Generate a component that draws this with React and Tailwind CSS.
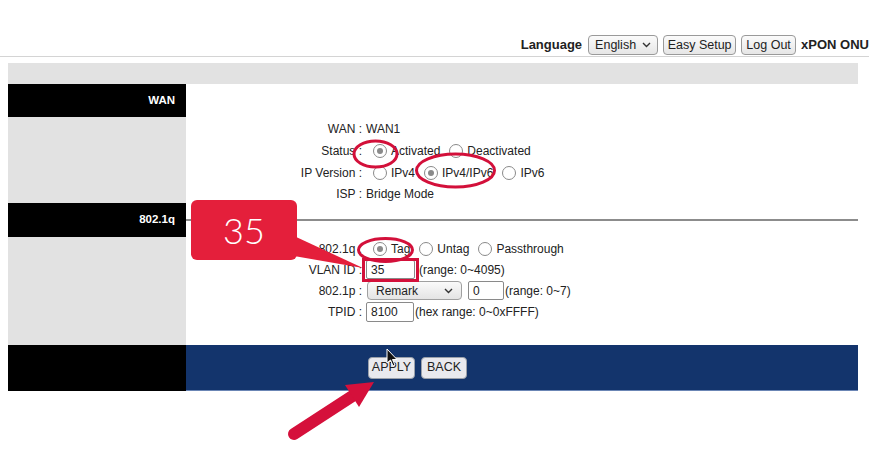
import React from 'react';

const Radio = ({ checked, first }) => (
    <span
    className={`inline-flex items-center justify-center w-[14px] h-[14px] rounded-full border-[1.5px] border-[#8a8a8a] bg-white shrink-0 ${first ? 'ml-[11px]' : 'ml-[9px]'} mr-[4px]`}
    >
    {checked && <span className="w-[6px] h-[6px] rounded-full bg-[#8a8a8a]" />}
    </span>
);

const Row = ({ label, children, h = 'h-[22px]' }) => (
    <div className={`flex items-center ${h}`}>
    <div className="w-[176px] text-right shrink-0">{label}</div>
    <div className="flex items-center">{children}</div>
    </div>
);

const Btn = ({ children, className = '' }) => (
    <button
    className={`h-[20px] px-0 whitespace-nowrap rounded-[4px] border border-[#9a9a9a] bg-gradient-to-b from-[#fbfbfb] to-[#e6e6e6] text-[12.5px] text-[#222] leading-none ${className}`}
    >
    {children}
    </button>
);

const Chevron = () => (
    <svg width="9" height="6" viewBox="0 0 9 6" className="shrink-0">
    <path d="M1 1 L4.5 4.5 L8 1" fill="none" stroke="#333" strokeWidth="1.4" />
    </svg>
);

const App = () => {
    return (
    <div className="relative w-[884px] h-[450px] bg-white overflow-hidden text-[12px] text-[#222]" style={{ fontFamily: '"Liberation Sans", Arial, sans-serif' }}>
        {/* header */}
        <div className="w-[869px] h-[57px] flex items-end justify-end pb-[1px] border-b border-[#d4d4d4]">
        <div className="flex items-center gap-[5px] h-[20px]">
            <span className="font-bold text-[13px] mr-[1px]">Language</span>
            <div className="w-[70px] h-[20px] rounded-[4px] border border-[#9a9a9a] bg-gradient-to-b from-[#fbfbfb] to-[#e6e6e6] flex items-center justify-between pl-[6px] pr-[6px] text-[12.5px]">
            <span>English</span>
            <Chevron />
            </div>
            <Btn className="w-[73px]">Easy Setup</Btn>
            <Btn className="w-[55px]">Log Out</Btn>
            <span className="font-bold text-[13px]">xPON ONU</span>
        </div>
        </div>

        {/* main table */}
        <div className="ml-[8px] mt-[6px] w-[850px]">
        <div className="h-[21px] bg-[#e2e2e2]" />

        <div className="flex h-[33px]">
            <div className="w-[178px] bg-black text-white font-bold text-[11.5px] flex items-center justify-end pr-[11px]">WAN</div>
            <div className="flex-1 bg-white" />
        </div>

        <div className="flex h-[86px]">
            <div className="w-[178px] bg-[#e2e2e2]" />
            <div className="flex-1 bg-white pt-[1px]">
            <Row label="WAN :">
                <span className="ml-[4px]">WAN1</span>
            </Row>
            <Row label="Status :">
                <Radio checked first />
                <span>Activated</span>
                <Radio />
                <span>Deactivated</span>
            </Row>
            <Row label="IP Version :">
                <Radio first />
                <span>IPv4</span>
                <Radio checked />
                <span>IPv4/IPv6</span>
                <Radio />
                <span>IPv6</span>
            </Row>
            <Row label="ISP :" h="h-[20px]">
                <span className="ml-[4px]">Bridge Mode</span>
            </Row>
            </div>
        </div>

        <div className="flex h-[34px]">
            <div className="w-[178px] bg-black text-white font-bold text-[11.5px] flex items-center justify-end pr-[11px]">802.1q</div>
            <div className="flex-1 bg-white flex items-center">
            <div className="w-full h-[2px] bg-[#8c8c8c]" />
            </div>
        </div>

        <div className="flex h-[108px]">
            <div className="w-[178px] bg-[#e2e2e2]" />
            <div className="flex-1 bg-white pt-[1px]">
            <Row label="802.1q :" h="h-[21px]">
                <Radio checked first />
                <span>Tag</span>
                <Radio />
                <span>Untag</span>
                <Radio />
                <span>Passthrough</span>
            </Row>
            <Row label="VLAN ID :" h="h-[21px]">
                <div className="ml-[4px] w-[49px] h-[19px] border border-[#8a8a8a] rounded-[2px] pl-[4px] flex items-center">35</div>
                <span className="ml-[4px]">(range: 0~4095)</span>
            </Row>
            <Row label="802.1p :" h="h-[21px]">
                <div className="ml-[5px] w-[95px] h-[19px] rounded-[4px] border border-[#a0a0a0] bg-gradient-to-b from-[#fafafa] to-[#e4e4e4] flex items-center justify-between pl-[8px] pr-[8px]">
                <span>Remark</span>
                <Chevron />
                </div>
                <div className="ml-[6px] w-[36px] h-[19px] border border-[#8a8a8a] rounded-[2px] pl-[4px] flex items-center">0</div>
                <span className="ml-[1px]">(range: 0~7)</span>
            </Row>
            <Row label="TPID :" h="h-[21px]">
                <div className="ml-[4px] w-[48px] h-[20px] border border-[#8a8a8a] rounded-[2px] pl-[4px] flex items-center">8100</div>
                <span className="ml-[1px]">(hex range: 0~0xFFFF)</span>
            </Row>
            </div>
        </div>

        <div className="flex h-[46px]">
            <div className="w-[178px] bg-black" />
            <div className="flex-1 bg-[#13346c] border-b border-[#6b86b5] flex items-center pl-[182px] gap-[6px]">
            <button className="h-[22px] w-[47px] rounded-[4px] border border-[#9aa0aa] bg-[#e9e9ee] text-[12.5px] text-[#222]">APPLY</button>
            <button className="h-[22px] w-[46px] rounded-[4px] border border-[#9aa0aa] bg-[#e9e9ee] text-[12.5px] text-[#222]">BACK</button>
            </div>
        </div>
        </div>

        {/* annotations */}
        <svg className="absolute inset-0 pointer-events-none" width="884" height="450">
        <ellipse cx="375.5" cy="154" rx="21.5" ry="13" fill="none" stroke="#d3103a" strokeWidth="3" />
        <ellipse cx="455.5" cy="170.5" rx="39" ry="16.5" fill="none" stroke="#d3103a" strokeWidth="3" />
        <ellipse cx="385.5" cy="250" rx="27" ry="11.5" fill="none" stroke="#d3103a" strokeWidth="3" />
        <rect x="363.5" y="259.5" width="54" height="21" fill="none" stroke="#d3103a" strokeWidth="3" />
        <polygon points="294,236 294,256 363,268" fill="#e41f3b" />
        <line x1="294" y1="434" x2="354" y2="395" stroke="#d5103b" strokeWidth="12" strokeLinecap="round" />
        <polygon points="374,382 345,385 359,407" fill="#d5103b" />
        <path d="M387 349 L387 363 L390.5 360 L393 366 L395 365 L392.5 359.5 L397 359.5 Z" fill="#111" stroke="#fff" strokeWidth="1" />
        </svg>
        <div
        className="absolute left-[191px] top-[200px] w-[106px] h-[60px] rounded-[6px] bg-[#e41f3b] text-white flex items-center justify-center text-[36px] font-light"
        style={{ fontFamily: 'Lato, "Open Sans", sans-serif' }}
        >
        35
        </div>
    </div>
    );
};

export default App;
